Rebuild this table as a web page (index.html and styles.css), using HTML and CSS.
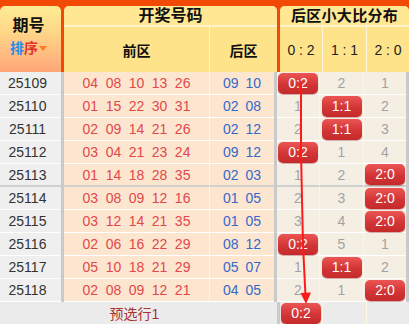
FILE: index.html
```html
<!DOCTYPE html>
<html lang="zh">
<head>
<meta charset="utf-8">
<link rel="stylesheet" href="styles.css">
</head>
<body>
<div class="board">
  <div class="head">
    <div class="h-issue">
      <div class="h-issue-title">期号</div>
      <div class="sort"><span class="s1">排</span><span class="s2">序</span><span class="tri"></span></div>
    </div>
    <div class="h-draw">
      <div class="h-title">开奖号码</div>
      <div class="h-sub">
        <div class="h-front">前区</div>
        <div class="h-back">后区</div>
      </div>
    </div>
    <div class="h-dist">
      <div class="h-title">后区小大比分布</div>
      <div class="h-sub">
        <div class="hd c1">0 : 2</div>
        <div class="hd c2">1 : 1</div>
        <div class="hd c3">2 : 0</div>
      </div>
    </div>
  </div>

  <div class="rows">
    <div class="row">
      <div class="issue">25109</div>
      <div class="front"><span>04</span><span>08</span><span>10</span><span>13</span><span>26</span></div>
      <div class="back"><span>09</span><span>10</span></div>
      <div class="dist"><div class="d c1"><span class="badge">0:2</span></div><div class="d c2">2</div><div class="d c3">1</div></div>
    </div>
    <div class="row">
      <div class="issue">25110</div>
      <div class="front"><span>01</span><span>15</span><span>22</span><span>30</span><span>31</span></div>
      <div class="back"><span>02</span><span>08</span></div>
      <div class="dist"><div class="d c1">1</div><div class="d c2"><span class="badge">1:1</span></div><div class="d c3">2</div></div>
    </div>
    <div class="row">
      <div class="issue">25111</div>
      <div class="front"><span>02</span><span>09</span><span>14</span><span>21</span><span>26</span></div>
      <div class="back"><span>02</span><span>12</span></div>
      <div class="dist"><div class="d c1">2</div><div class="d c2"><span class="badge">1:1</span></div><div class="d c3">3</div></div>
    </div>
    <div class="row">
      <div class="issue">25112</div>
      <div class="front"><span>03</span><span>04</span><span>21</span><span>23</span><span>24</span></div>
      <div class="back"><span>09</span><span>12</span></div>
      <div class="dist"><div class="d c1"><span class="badge">0:2</span></div><div class="d c2">1</div><div class="d c3">4</div></div>
    </div>
    <div class="row group-end">
      <div class="issue">25113</div>
      <div class="front"><span>01</span><span>14</span><span>18</span><span>28</span><span>35</span></div>
      <div class="back"><span>02</span><span>03</span></div>
      <div class="dist"><div class="d c1">1</div><div class="d c2">2</div><div class="d c3"><span class="badge">2:0</span></div></div>
    </div>
    <div class="row">
      <div class="issue">25114</div>
      <div class="front"><span>03</span><span>08</span><span>09</span><span>12</span><span>16</span></div>
      <div class="back"><span>01</span><span>05</span></div>
      <div class="dist"><div class="d c1">2</div><div class="d c2">3</div><div class="d c3"><span class="badge">2:0</span></div></div>
    </div>
    <div class="row">
      <div class="issue">25115</div>
      <div class="front"><span>03</span><span>12</span><span>14</span><span>21</span><span>35</span></div>
      <div class="back"><span>01</span><span>05</span></div>
      <div class="dist"><div class="d c1">3</div><div class="d c2">4</div><div class="d c3"><span class="badge">2:0</span></div></div>
    </div>
    <div class="row">
      <div class="issue">25116</div>
      <div class="front"><span>02</span><span>06</span><span>16</span><span>22</span><span>29</span></div>
      <div class="back"><span>08</span><span>12</span></div>
      <div class="dist"><div class="d c1"><span class="badge">0:2</span></div><div class="d c2">5</div><div class="d c3">1</div></div>
    </div>
    <div class="row">
      <div class="issue">25117</div>
      <div class="front"><span>05</span><span>10</span><span>18</span><span>21</span><span>29</span></div>
      <div class="back"><span>05</span><span>07</span></div>
      <div class="dist"><div class="d c1">1</div><div class="d c2"><span class="badge">1:1</span></div><div class="d c3">2</div></div>
    </div>
    <div class="row">
      <div class="issue">25118</div>
      <div class="front"><span>02</span><span>08</span><span>09</span><span>12</span><span>21</span></div>
      <div class="back"><span>04</span><span>05</span></div>
      <div class="dist"><div class="d c1">2</div><div class="d c2">1</div><div class="d c3"><span class="badge">2:0</span></div></div>
    </div>
    <div class="foot">
      <div class="f-label">预选行1</div>
      <div class="dist"><div class="d f c1"><span class="badge">0:2</span></div><div class="d f c2"></div><div class="d f c3"></div></div>
    </div>
  </div>

  <svg class="trend" width="409" height="324" viewBox="0 0 409 324">
    <polyline points="301,83 301,152 303,245 305.5,296" fill="none" stroke="#ff1a1a" stroke-width="2"/>
    <polygon points="306,304 300.5,293 311,292.5" fill="#ff1a1a"/>
  </svg>
</div>
</body>
</html>
```

FILE: styles.css
```css
* { box-sizing: border-box; }
html, body { margin: 0; padding: 0; background: #ffffff; }
body { font-family: "Liberation Sans", "Noto Sans CJK SC", sans-serif; }

.board { position: relative; width: 409px; height: 324px; overflow: hidden; }

/* header */
.head {
  display: flex;
  gap: 3px;
  height: 72px;
  padding-top: 6px;
  background: #f24a06;
}
.h-issue {
  width: 61px;
  border-radius: 5px 5px 0 0;
  background: linear-gradient(#ffec95, #ffd688 40%, #ffa679);
  display: flex;
  flex-direction: column;
  align-items: center;
  padding-top: 11px;
  padding-right: 4px;
}
.h-issue-title { font-size: 16px; font-weight: bold; color: #111; line-height: 18px; }
.sort { margin-top: 5px; font-size: 14px; font-weight: bold; line-height: 16px; display: flex; align-items: center; }
.s1 { color: #2d8be6; }
.s2 { color: #e0322d; }
.tri {
  width: 0; height: 0;
  border-left: 4px solid transparent;
  border-right: 4px solid transparent;
  border-top: 5px solid #ff7b22;
  margin-left: 1px;
}
.h-draw, .h-dist {
  display: flex;
  flex-direction: column;
  border-radius: 5px 5px 0 0;
  overflow: hidden;
  background: #ffe38b;
}
.h-draw { width: 213px; }
.h-dist { width: 129px; }
.h-title {
  height: 21px;
  background: #ffe794;
  border-bottom: 2px solid #fff3cf;
  text-align: center;
  font-size: 16px;
  font-weight: bold;
  color: #111;
  line-height: 19px;
}
.h-dist .h-title { font-size: 15px; letter-spacing: 0.3px; }
.h-sub { flex: 1; display: flex; }
.h-front, .h-back {
  display: flex; align-items: center; justify-content: center;
  font-size: 14px; font-weight: bold; color: #111;
}
.h-front { width: 146px; border-right: 1px solid #fff3cf; }
.h-back { flex: 1; }
.hd {
  display: flex; align-items: center; justify-content: center;
  font-size: 14px; color: #222;
}

.c1 { width: 43px; border-right: 1px solid #fff6df; }
.c2 { width: 44px; border-right: 1px solid #fff6df; }
.c3 { width: 42px; }

/* body */
.row {
  display: flex;
  gap: 3px;
  height: 23px;
  background: #cacaca;
}
.row > .issue, .row > .front, .row > .back, .row .d {
  border-bottom: 1px solid #ffffff;
}
.row.group-end > .issue, .row.group-end > .front, .row.group-end > .back, .row.group-end .d {
  border-bottom: 2px solid #d0d0d0;
}
.issue {
  width: 61px;
  background: #efefef;
  color: #333;
  font-size: 14px;
  display: flex; align-items: center; justify-content: center;
  padding-right: 6px;
}
.front, .back {
  display: flex; align-items: center; justify-content: center;
  background: #fde6d0;
  font-size: 14px;
}
.front { width: 146px; color: #e2484a; gap: 7.5px; border-right: 1px solid #fff3ea; }
.row > .front { border-right: 1px solid #fff3ea; }
.back { width: 64px; flex: 1; color: #3668c9; gap: 7px; }
.row > .front { width: 146px; }
.row > .back { flex: 0 0 64px; margin-left: -3px; }

.dist { display: flex; width: 129px; }
.d {
  display: flex; align-items: center; justify-content: center;
  background: #f5efe3;
  color: #a3a3a3;
  font-size: 14px;
}
.badge {
  display: block;
  width: 40px;
  height: 21px;
  border-radius: 5px;
  background: linear-gradient(#ec5555, #d23535 55%, #c52a2a);
  color: #ffffff;
  font-size: 14px;
  line-height: 21px;
  text-align: center;
  box-shadow: 0 1px 1px rgba(120, 0, 0, 0.35);
}

.foot {
  display: flex;
  gap: 3px;
  height: 22px;
  background: #cacaca;
}
.f-label {
  width: 277px;
  background: #ebebeb;
  color: #a83232;
  font-size: 14px;
  display: flex; align-items: center; justify-content: center;
  padding-right: 8px;
}
.d.f { background: #ebebeb; }

.trend { position: absolute; left: 0; top: 0; pointer-events: none; }
```
